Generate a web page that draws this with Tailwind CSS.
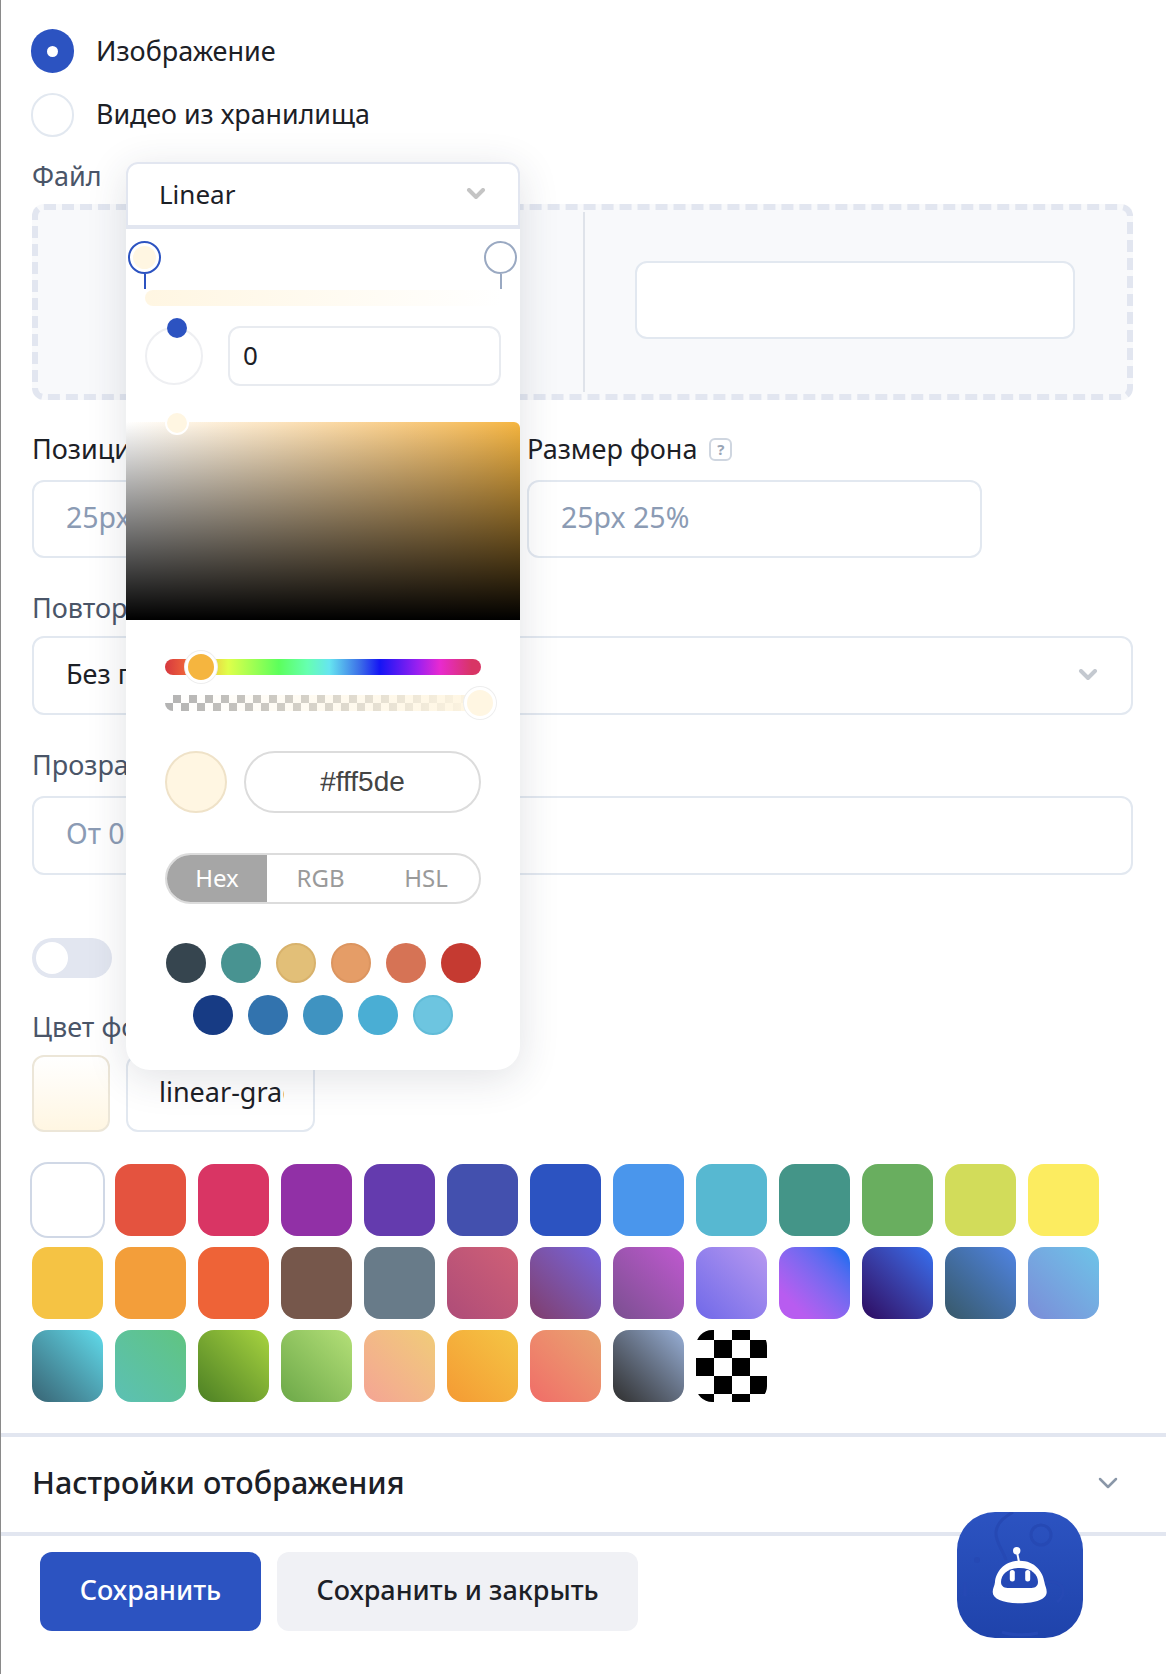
<!DOCTYPE html>
<html lang="ru">
  <head>
    <meta charset="UTF-8" />
    <meta name="viewport" content="width=device-width, initial-scale=1.0" />
    <script src="https://cdn.jsdelivr.net/npm/@tailwindcss/browser@4"></script>
    <title>Настройки фона</title>
  </head>
  <body class="bg-white font-['Noto_Sans','Liberation_Sans',sans-serif] text-[#1c2026] antialiased">
    <div class="relative w-[1166px] h-[1674px] overflow-hidden border-l border-[#8a8a8a]">

      <!-- Form -->
      <div class="pt-[29px] pl-[31px] pr-[33px]">
        <div class="flex items-center h-[44px] gap-[22px] -ml-[1px]">
          <span class="w-[43px] h-[44px] rounded-full bg-[#2c53c1] flex items-center justify-center">
            <span class="w-[11px] h-[11px] rounded-full bg-white"></span>
          </span>
          <span class="text-[27px]">Изображение</span>
        </div>
        <div class="flex items-center h-[44px] gap-[22px] mt-[20px] -ml-[1px]">
          <span class="w-[43px] h-[44px] rounded-full border-2 border-[#e2e8f0] bg-white"></span>
          <span class="text-[26.8px] pb-[1px]">Видео из хранилища</span>
        </div>

        <div class="mt-[23px] h-[32px] text-[27px] leading-[32px] text-[#4a5568]">Файл</div>
        <div class="mt-[12px] h-[196px] flex border-[6px] border-dashed border-[#e2e6f0] rounded-xl bg-[#f8f9fb] p-[2px]">
          <div class="w-[545px] border-r-2 border-[#dfe3ea]"></div>
          <div class="flex-1 flex items-center justify-center pl-[3px] pr-[3px] pb-[4px]">
            <div class="w-[440px] h-[78px] bg-white border-2 border-[#e2e8f0] rounded-xl"></div>
          </div>
        </div>

        <div class="mt-[33px] grid grid-cols-[454px_455px] gap-x-[41px]">
          <div>
            <div class="h-[32px] text-[27px] leading-[32px]">Позиция фона</div>
            <div class="mt-[15px] h-[78px] border-2 border-[#e2e8f0] rounded-xl flex items-center pl-[32px] pb-[4px] text-[28.5px] text-[#8b9bb4]">25px 25%</div>
          </div>
          <div>
            <div class="h-[32px] text-[27px] leading-[32px] flex items-center gap-[12px]">
              Размер фона
              <span class="w-[23px] h-[23px] border-2 border-[#cfd6e0] rounded-md text-[15px] leading-none text-[#9aa5b5] flex items-center justify-center font-bold">?</span>
            </div>
            <div class="mt-[15px] h-[78px] border-2 border-[#e2e8f0] rounded-xl flex items-center pl-[32px] pb-[4px] text-[28.5px] text-[#8b9bb4]">25px 25%</div>
          </div>
        </div>

        <div class="mt-[34px] h-[32px] text-[27px] leading-[32px] text-[#4a5568]">Повторение</div>
        <div class="mt-[12px] h-[79px] border-2 border-[#e2e8f0] rounded-xl flex items-center justify-between pl-[32px] pr-[33px] pb-[2px] text-[27px]">
          Без повторения
          <svg width="20" height="12" viewBox="0 0 20 12" fill="none" stroke="#c4c9d0" stroke-width="4" stroke-linecap="round" stroke-linejoin="round"><path d="M3 2l7 7 7-7" /></svg>
        </div>

        <div class="mt-[34px] h-[32px] text-[27px] leading-[32px] text-[#4a5568]">Прозрачность</div>
        <div class="mt-[15px] h-[79px] border-2 border-[#e2e8f0] rounded-xl flex items-center pl-[32px] pb-[4px] text-[28.5px] text-[#8b9bb4]">От 0 до 1</div>

        <div class="mt-[63px] w-[80px] h-[40px] rounded-full bg-[#e2e6f0] p-[4px]">
          <div class="w-[32px] h-[32px] rounded-full bg-white"></div>
        </div>

        <div class="mt-[33px] h-[32px] text-[27px] leading-[32px] text-[#4a5568]">Цвет фона</div>
        <div class="mt-[12px] flex gap-[16px]">
          <div class="w-[78px] h-[77px] rounded-xl border-2 border-[#ece6d8] bg-linear-to-b from-white to-[#fff6e2]"></div>
          <div class="w-[189px] h-[77px] border-2 border-[#e2e8f0] rounded-xl px-[31px] flex items-center">
            <input type="text" value="linear-gradient(#fff, #fff5de)" class="w-[125px] bg-transparent text-[27px] pb-[2px] outline-none" />
          </div>
        </div>

        <!-- Palette -->
        <div class="mt-[32px] grid grid-cols-[repeat(13,71px)] auto-rows-[72px] gap-x-[12px] gap-y-[11px]">
          <div class="rounded-2xl bg-white ring-2 ring-[#d0d8e6]"></div>
          <div class="rounded-2xl bg-[#e4533f]"></div>
          <div class="rounded-2xl bg-[#d93564]"></div>
          <div class="rounded-2xl bg-[#9130a6]"></div>
          <div class="rounded-2xl bg-[#643bae]"></div>
          <div class="rounded-2xl bg-[#4350ae]"></div>
          <div class="rounded-2xl bg-[#2c53c1]"></div>
          <div class="rounded-2xl bg-[#4a96ec]"></div>
          <div class="rounded-2xl bg-[#57b8d1]"></div>
          <div class="rounded-2xl bg-[#449588]"></div>
          <div class="rounded-2xl bg-[#69ae5f]"></div>
          <div class="rounded-2xl bg-[#d2dc5a]"></div>
          <div class="rounded-2xl bg-[#fcec60]"></div>

          <div class="rounded-2xl bg-[#f5c344]"></div>
          <div class="rounded-2xl bg-[#f39e3a]"></div>
          <div class="rounded-2xl bg-[#ee6337]"></div>
          <div class="rounded-2xl bg-[#76574b]"></div>
          <div class="rounded-2xl bg-[#687b89]"></div>
          <div class="rounded-2xl bg-linear-to-tr from-[#ae4c78] to-[#d06076]"></div>
          <div class="rounded-2xl bg-linear-to-tr from-[#803c6c] to-[#7464e0]"></div>
          <div class="rounded-2xl bg-linear-to-tr from-[#7a4f90] to-[#c058d0]"></div>
          <div class="rounded-2xl bg-linear-to-tr from-[#7068e8] to-[#b898f0]"></div>
          <div class="rounded-2xl bg-linear-to-tr from-[#b85cf0] from-20% to-[#2c6cf0] to-90%"></div>
          <div class="rounded-2xl bg-linear-to-tr from-[#2c0860] to-[#3470f0]"></div>
          <div class="rounded-2xl bg-linear-to-tr from-[#385868] to-[#5084e4]"></div>
          <div class="rounded-2xl bg-linear-to-tr from-[#7a8cd8] to-[#6cc4e8]"></div>

          <div class="rounded-2xl bg-linear-to-tr from-[#386474] to-[#60dcec]"></div>
          <div class="rounded-2xl bg-linear-to-tr from-[#5cc0b4] to-[#60c480]"></div>
          <div class="rounded-2xl bg-linear-to-tr from-[#4c8024] to-[#a8d440]"></div>
          <div class="rounded-2xl bg-linear-to-tr from-[#6ca848] to-[#b4e078]"></div>
          <div class="rounded-2xl bg-linear-to-tr from-[#f4a494] to-[#f0cc78]"></div>
          <div class="rounded-2xl bg-linear-to-tr from-[#f49a34] to-[#f4c644]"></div>
          <div class="rounded-2xl bg-linear-to-tr from-[#f06c68] to-[#e8a470]"></div>
          <div class="rounded-2xl bg-linear-to-tr from-[#303030] to-[#98b0d8]"></div>
          <div class="rounded-2xl bg-[repeating-conic-gradient(#fff_0_25%,#000_0_50%)] bg-[length:36px_36px] bg-[position:0_-8px]"></div>
        </div>
      </div>

      <!-- Collapsed section -->
      <div class="mt-[31px] h-[103px] border-y-4 border-[#e2e6f0] pl-[31px] pr-[48px] pb-[3px] flex items-center justify-between">
        <span class="text-[30.5px] font-medium">Настройки отображения</span>
        <svg width="20" height="12" viewBox="0 0 20 12" fill="none" stroke="#8a97a8" stroke-width="2.5" stroke-linecap="round" stroke-linejoin="round"><path d="M2 2l8 8 8-8" /></svg>
      </div>

      <!-- Actions -->
      <div class="mt-[16px] pl-[39px] flex gap-[16px]">
        <button class="w-[221px] h-[79px] rounded-xl bg-[#2c53c1] text-white text-[27px] font-medium pb-[2px]">Сохранить</button>
        <button class="w-[361px] h-[79px] rounded-xl bg-[#f0f1f5] text-[27px] font-medium pb-[2px]">Сохранить и закрыть</button>
      </div>

      <!-- Chat bot button -->
      <div class="absolute left-[956px] top-[1512px] w-[126px] h-[126px] rounded-[38px] bg-linear-to-b from-[#2c53c1] to-[#1f43ab] overflow-hidden">
        <svg width="126" height="126" viewBox="0 0 126 126" fill="none">
          <g stroke="#2649b4" stroke-width="3">
            <circle cx="84" cy="23" r="10" />
            <path d="M56 0c-8 5-16 10-17 20s8 20 10 28" />
            <path d="M100 90c8-6 8-14 2-18s-16-2-22 0" />
            <path d="M8 70v14M45 120c8 3 24 4 36 1" />
          </g>
          <circle cx="20" cy="48" r="3" fill="#2649b4" />
          <path d="M60 40l2 10" stroke="#fff" stroke-width="2" />
          <circle cx="59.7" cy="38.7" r="3.7" fill="#fff" />
          <path d="M62.7 48.7C47 48.7 39 60 38 70c-.4 4-2.3 6-2.3 10 0 7 10.3 11.3 27 11.3 16.3 0 27-4.3 27-11.3 0-4-1.7-6-2.3-10C86 60 78 48.7 62.7 48.7Z" fill="#fff" />
          <path d="M62.7 56C50 56 44 63 44 70c0 5 4 6 8 6h21c4 0 8-1 8-6 0-7-6-14-18.3-14Z" fill="#2448b5" />
          <rect x="52.8" y="58" width="5" height="11.5" rx="2.5" fill="#fff" />
          <rect x="68.2" y="58" width="5" height="11.5" rx="2.5" fill="#fff" />
        </svg>
      </div>

      <!-- Gradient picker popover -->
      <div class="absolute left-[125px] top-[162px] w-[394px] h-[908px] bg-white rounded-t-xl rounded-b-[24px] shadow-[0_8px_40px_rgba(40,50,70,0.14)]">
        <div class="h-[67px] border-2 border-b-4 border-[#e2e6f0] rounded-t-xl flex items-center justify-between pl-[31px] pr-[32px] pb-[1px] text-[26px]">
          Linear
          <svg width="20" height="12" viewBox="0 0 20 12" fill="none" stroke="#c4c4c4" stroke-width="4" stroke-linecap="round" stroke-linejoin="round"><path d="M3 2l7 7 7-7" /></svg>
        </div>

        <div class="relative pt-[61px] px-[19px]">
          <div class="h-[16px] rounded-l-full bg-linear-to-r from-[#fff6e2] to-white"></div>
          <div class="absolute left-[2px] top-[12px] flex flex-col items-center">
            <div class="w-[33px] h-[33px] rounded-full border-2 border-[#2c53c1] bg-white flex items-center justify-center">
              <div class="w-[23px] h-[23px] rounded-full bg-[#fff6e2]"></div>
            </div>
            <div class="w-[2px] h-[15px] bg-[#2c53c1]"></div>
          </div>
          <div class="absolute left-[358px] top-[12px] flex flex-col items-center">
            <div class="w-[33px] h-[33px] rounded-full border-2 border-[#9aa9c2] bg-white"></div>
            <div class="w-[2px] h-[15px] bg-[#9aa9c2]"></div>
          </div>
        </div>

        <div class="mt-[20px] pl-[19px] pr-[19px] h-[60px] flex items-center gap-[25px]">
          <div class="relative w-[58px] h-[58px] rounded-full border-2 border-[#eeeff2]">
            <div class="absolute left-[20px] top-[-11px] w-[20px] h-[20px] rounded-full bg-[#2c53c1]"></div>
          </div>
          <div class="flex-1 h-[60px] border-2 border-[#e8ebf0] rounded-xl flex items-center pl-[13px] pb-[1px] text-[26px]">0</div>
        </div>

        <!-- Saturation area -->
        <div class="relative mt-[36px] h-[198px] bg-linear-to-r from-white to-[#f5b53f] rounded-tr-md">
          <div class="h-full bg-linear-to-t from-black to-transparent rounded-tr-md"></div>
          <div class="absolute left-[39px] top-[-11px] w-[24px] h-[24px] rounded-full bg-[#fff6e2] border-2 border-white"></div>
        </div>

        <div class="mx-[39px] mt-[39px] relative h-[16px] rounded-full bg-[linear-gradient(to_right,#d6383f,#f0663a_7%,#f5b53f_12%,#dfff4a_20%,#5cff5c_36%,#66ffb0_45%,#66e5f0_52%,#3a6ae8_62%,#1515f5_68%,#9a20f0_80%,#e82ad0_87%,#d83565_97%)]">
          <div class="absolute left-[20px] top-[-8px] w-[32px] h-[32px] rounded-full bg-[#f5b53f] border-[3px] border-white ring-1 ring-[#eeeeee]"></div>
        </div>

        <div class="mx-[39px] mt-[20px] relative h-[16px] rounded-l-full bg-[repeating-conic-gradient(#b3b3b3_0_25%,#fff_0_50%)] bg-[length:16px_16px]">
          <div class="h-full rounded-l-full bg-linear-to-r from-transparent to-[#fff6e2]"></div>
          <div class="absolute right-[-15px] top-[-8px] w-[32px] h-[32px] rounded-full bg-[#fff6e2] border-[3px] border-white ring-1 ring-[#eeeeee]"></div>
        </div>

        <div class="mx-[39px] mt-[40px] flex items-center gap-[17px]">
          <div class="w-[62px] h-[62px] shrink-0 rounded-full bg-[#fff6e2] border-2 border-[#efe2c8]"></div>
          <div class="flex-1 h-[62px] rounded-full border-2 border-[#dcdcdc] flex items-center justify-center font-['Liberation_Sans',sans-serif] text-[28px] text-[#444]">#fff5de</div>
        </div>

        <div class="mx-[39px] mt-[40px] h-[51px] rounded-full border-2 border-[#dcdcdc] overflow-hidden flex items-center text-[24px] text-[#9a9a9a]">
          <div class="w-[100px] h-full bg-[#a6a6a6] text-white flex items-center justify-center pb-[2px]">Hex</div>
          <div class="w-[107px] text-center pb-[2px]">RGB</div>
          <div class="w-[104px] text-center pb-[2px]">HSL</div>
        </div>

        <div class="mx-[39px] mt-[39px] flex flex-wrap justify-center gap-x-[15px] gap-y-[12px]">
          <div class="w-[40px] h-[40px] rounded-full bg-[#36454f]"></div>
          <div class="w-[40px] h-[40px] rounded-full bg-[#489391]"></div>
          <div class="w-[40px] h-[40px] rounded-full bg-[#e2bf78] border-2 border-[#d8b26c]"></div>
          <div class="w-[40px] h-[40px] rounded-full bg-[#e59d67] border-2 border-[#dc9560]"></div>
          <div class="w-[40px] h-[40px] rounded-full bg-[#d67355]"></div>
          <div class="w-[40px] h-[40px] rounded-full bg-[#c53a31]"></div>
          <div class="w-[40px] h-[40px] rounded-full bg-[#173b84]"></div>
          <div class="w-[40px] h-[40px] rounded-full bg-[#3273ae]"></div>
          <div class="w-[40px] h-[40px] rounded-full bg-[#3f93c1]"></div>
          <div class="w-[40px] h-[40px] rounded-full bg-[#4aaed4]"></div>
          <div class="w-[40px] h-[40px] rounded-full bg-[#6dc5e0] border-2 border-[#62bcd8]"></div>
        </div>
      </div>
    </div>
  </body>
</html>
